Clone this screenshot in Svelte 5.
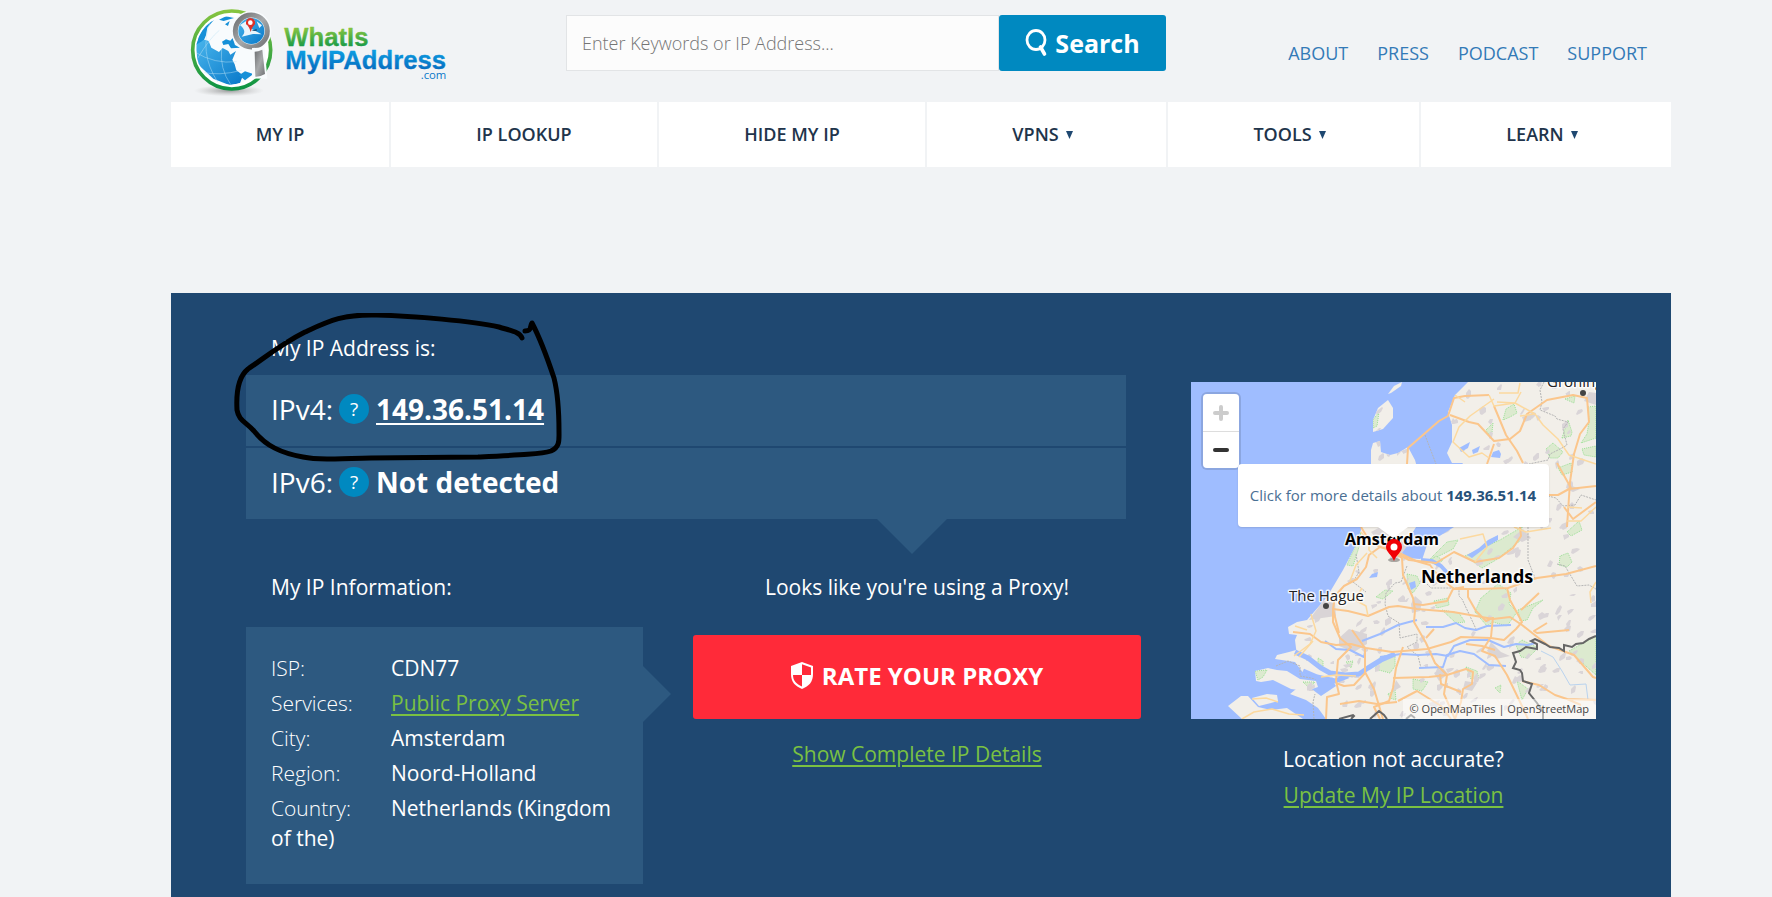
<script>
  const nav = [
    { label: 'MY IP', menu: false },
    { label: 'IP LOOKUP', menu: false },
    { label: 'HIDE MY IP', menu: false },
    { label: 'VPNS', menu: true },
    { label: 'TOOLS', menu: true },
    { label: 'LEARN', menu: true }
  ];
  const links = ['ABOUT', 'PRESS', 'PODCAST', 'SUPPORT'];
  const details = [
    { label: 'ISP:', value: 'CDN77' },
    { label: 'Services:', value: 'Public Proxy Server', link: true },
    { label: 'City:', value: 'Amsterdam' },
    { label: 'Region:', value: 'Noord-Holland' },
    { label: 'Country:', value: 'Netherlands (Kingdom of the)' }
  ];

  const land = [
    'M180 90L180 68L182 61L189 59L190 70L199 73L207 71L217 65L224 78L230 100L236 125L225 145L214 163L222 170L231 178L242 145L263 145L270 120L262 95L272 81L261 81L256 71L261 60L261 43L257 30L264 13L277 0H405V337H135L127 326L115 318L99 312L110 303L122 308L130 314L145 304L140 296L125 294L112 288L106 274L104 258L106 253L98 252L97 245L106 240L116 238L136 215L152 188L164 165L171 145Z',
    'M182 50L182 38L187 26L197 18L202 26L202 36L192 47Z',
    'M197 12L203 4L211 0L210 4L200 11Z',
    'M84 277L86 273L98 270L105 268L113 276L124 281L140 288L144 293L131 295L113 292L104 280Z',
    'M65 299L64 289L77 286L86 288L96 289L109 297L125 299L127 305L115 309L100 307L82 298L70 300Z',
    'M61 316L76 312L86 313L87 319L76 322L68 324Z',
    'M37 324L50 314L57 314L67 325L80 328L96 326L112 337H51Z'
  ];
  const waters = [
    'M211 171L220 159L242 145H263L239 160L231 170L229 177L216 176Z',
    'M276 173L288 166L297 158L307 153L307 158L294 166L281 176Z',
    'M302 70L308 68L310 72L309 76L300 75Z', 'M281 68L289 64L287 70L282 72Z', 'M268 66L279 60L277 66L270 70Z',
    'M218 201L224 199L225 205L220 208Z', 'M181 192L187 190L186 195L178 196Z'
  ];
  const rivers = [
    'M104 270L117 276L130 286L139 291L154 293L168 292L177 286L190 278L204 272', 'M112 289L126 295L144 299L157 294',
    'M189 275L210 272L228 273L245 272L257 274L263 264L279 258L297 258L313 265L325 262L337 263L344 261',
    'M134 259L145 267L159 268L173 275L174 270', 'M171 259L189 252L207 243L218 240L226 238', 'M235 245L252 245L265 241L274 246L285 248L296 244L320 243',
    'M228 286L252 285L256 273L269 269L283 272L298 283L315 284'
  ];
  const roads = [
    'M216 82L217 66L248 39L257 34L263 16L274 14L298 13M259 33L278 40L287 42L303 59L319 57L329 49L336 32L356 18L382 13L396 16L398 40L389 52L383 72L379 100L376 145',
    'M303 24L308 36L315 53L326 69L332 81M303 62L296 82',
    'M298 13L303 24L324 21L344 32L352 43L367 57L378 73L405 82M264 13L274 20M303 17L279 34L268 45L262 60L278 75L291 71L298 76M308 11H327L329 1M329 34L343 32M306 20L324 21L330 10',
    'M357 113L367 113L378 107L405 104M366 81L380 106M373 125L382 137L405 120M329 145L330 154L322 166L308 176L284 180L263 170L245 181L218 178L205 171',
    'M203 158L189 165L178 173L175 185L166 197L153 204L144 214L142 227L148 251M203 171L211 176L212 193L222 216L224 228L223 240L235 261L244 281L256 293L253 312L264 337',
    'M170 145L178 158L189 165L206 170L225 179L239 183L248 195L263 207L287 207L317 206L346 196L375 192L405 184',
    'M142 227L157 229L177 234L198 225L207 224L226 227L262 230L302 237L319 235L331 243L345 254L358 264L383 273L402 295L405 296',
    'M222 222L232 223L256 219L262 207L273 205M277 208L277 215L285 229L295 239L301 236M302 235L300 255L291 269L304 274L316 293L331 324L337 337',
    'M102 250L119 252L130 260L145 263L160 262L175 266L201 270L236 267L260 260L270 255L300 256L313 258L325 247L331 240L319 218L316 206',
    'M142 227L142 240L149 256L160 265L147 278L145 299L148 312L136 315L135 337M161 248L174 266L174 290L183 307L192 337M175 290L163 303L153 304L145 301',
    'M212 265L205 286L202 306L198 319L183 325L189 337M202 296L238 295L256 293L275 287L282 290L281 302L272 307L270 320L264 337',
    'M149 322L168 319L186 322L206 320M207 319L226 309L250 324L260 337M249 292L250 302L270 310M243 247L235 256M275 262L291 264L304 268',
    'M331 299L348 303L364 313L376 317L390 323M376 317L405 318M356 241L343 249L346 251L378 248M330 228L348 211',
    'M120 232L125 249L119 262L103 274M171 206L164 218L175 224L177 234M176 171L165 183L159 199M178 158V168L186 176M170 150L176 158L190 160',
    'M51 337L63 330L81 327L98 332L113 333M61 317L75 316L87 320M130 295L145 293L165 294M104 244L116 248M122 259L108 275',
    'M376 125L391 126M376 139H390L405 125M269 157L292 152L296 165L284 180M323 145L335 150L360 146M405 200L399 210L400 221'
  ];
  const parks = [
    'M312 38L315 27L323 22L326 31L319 35Z', 'M355 67L362 61L372 70L367 76L359 76Z', 'M367 86L380 81L381 90L371 93Z', 'M397 25L405 24V56L390 61L396 52L398 40Z', 'M371 56L377 38L381 50L380 54Z', 'M295 48L302 41L301 50L297 52Z', 'M391 67L405 64V75L393 73Z', 'M374 17L384 14L383 21Z',
    'M238 178L256 160L267 158L262 167L248 174Z', 'M274 174L309 158L331 145L330 158L305 178L291 186Z', 'M216 192L226 194L229 201L222 211L217 207Z',
    'M284 230L290 216L307 202L320 211L318 222L326 230L316 244L302 240L296 244Z', 'M325 263L331 258L347 266L337 276L330 275Z', 'M378 269L405 254V293L387 277Z',
    'M275 285L286 289L288 297L280 297Z', 'M222 297L237 300L231 309L222 307Z', 'M243 219L257 216L258 223L246 226Z', 'M251 228L268 231L274 240L265 241Z',
    'M326 299L337 307L331 318Z', 'M189 275L204 272L204 284L199 291L184 287Z', 'M155 280L162 279L160 286Z', 'M164 165L170 150L168 165L162 184L156 183Z', 'M368 183L369 174L377 171L381 180L376 185Z',
    'M376 150L388 139L391 148L380 154Z', 'M64 289L76 288L72 295L67 298Z', 'M112 300L124 300L118 306Z', 'M327 228L352 218L342 226L336 238L329 239Z', 'M185 215L194 208L202 209L192 217Z',
    'M197 312L204 308L205 318L199 316Z', 'M127 276L132 279L132 286L127 283Z', 'M304 306L310 303L309 311Z', 'M182 46L182 38L188 30L186 44Z', 'M262 95L268 88L266 94ZM240 178L245 174L252 178L246 183Z'
  ];
  const cities = [
    'M180 150L193 143L206 153L217 166L206 177L192 165Z', 'M118 238L132 219L144 221L145 234L131 236Z', 'M148 256L158 247L176 252L176 262L163 270L148 264Z', 'M220 222L224 214L231 220L229 229L221 231Z',
    'M300 260L310 270L319 274L305 277L296 269Z', 'M376 102L389 107L382 110L377 108Z', 'M331 35L342 31L340 38L333 40Z', 'M398 10L405 11V23L393 19Z', 'M238 321L249 318L246 325L239 324Z',
    'M274 299L286 301L281 309L272 307Z', 'M205 298L210 305L201 310Z', 'M322 155L332 147L340 156L331 160Z', 'M243 291L252 286L257 292L248 299Z', 'M185 60L190 58L191 63L187 65Z'
  ];
  const borders = [
    'M405 254L398 257L392 261L385 262L381 265L373 263L373 269L368 266L359 265L354 262L348 259L344 257L340 259L346 262V267L335 265L329 269L322 271L325 280L322 286L329 288L331 291L332 299L341 302L338 311L346 321L352 330L352 337',
    'M148 337L162 333L163 334L160 337M179 337L188 329L193 333L196 337M215 337L220 333L224 336'
  ];
  const dashes = [
    'M234 53L245 82M353 0L349 8L351 20L349 28L364 34L366 37L377 40L372 47L376 63L371 66L359 72L357 78L338 82M357 114L365 116L372 124L384 123L390 113L405 118M337 145L337 178L344 196M366 182L374 184L380 194L386 204L398 203L405 207',
    'M216 184L210 200L204 201L195 211L194 222L197 234L208 241L209 256L226 252L226 260L216 265L227 274L230 286M236 202L240 206L268 206L268 214L271 217L285 247M85 284L97 279L109 284L109 294L125 297M123 337L122 320L124 312M165 172L168 190L162 200L175 210'
  ];
  let seed = 7;
  const next = (range) => {
    seed = (seed * 16807) % 2147483647;
    return Math.floor((seed / 2147483647) * range);
  };
  const towns = Array.from({ length: 260 }, () => {
    const w = 2 + next(4);
    const h = 1 + next(4);
    return `M${110 + next(295)} ${next(335)}l${w} ${-h}l${1 + next(3)} ${next(3)}l${-next(3)} ${h + 1}l${-w} ${next(4)}l-${next(3)} -1Z`;
  });
</script>

<div class="page">
  <header>
    <a class="logo" href="#home" aria-label="WhatIsMyIPAddress.com">
      <svg viewBox="90 20 780 270" width="260" height="90">
        <defs>
          <linearGradient id="ring" x1="0" y1="0" x2="0" y2="1"><stop offset="0" stop-color="#86c440" /><stop offset="1" stop-color="#0d9444" /></linearGradient>
          <linearGradient id="green" x1="0" y1="0" x2="0" y2="1"><stop offset="0.2" stop-color="#82c341" /><stop offset="0.85" stop-color="#159947" /></linearGradient>
          <linearGradient id="blue" x1="0" y1="0" x2="0" y2="1"><stop offset="0.2" stop-color="#0c9be0" /><stop offset="0.9" stop-color="#0569bd" /></linearGradient>
          <linearGradient id="sea" x1="0" y1="0" x2="1" y2="1"><stop offset="0" stop-color="#48b5ec" /><stop offset="1" stop-color="#0878c9" /></linearGradient>
          <linearGradient id="steel" x1="0" y1="0" x2="1" y2="1"><stop offset="0" stop-color="#6c6e70" /><stop offset="0.5" stop-color="#a7a9ab" /><stop offset="1" stop-color="#707274" /></linearGradient>
          <radialGradient id="shade"><stop offset="0" stop-color="#777" stop-opacity="0.7" /><stop offset="1" stop-color="#aaa" stop-opacity="0" /></radialGradient>
          <clipPath id="globe"><circle cx="211" cy="150" r="103" /></clipPath>
        </defs>
        <ellipse cx="207" cy="271" rx="105" ry="17" fill="url(#shade)" />
        <circle cx="215" cy="149" r="117" fill="#fff" stroke="url(#ring)" stroke-width="11" />
        <g clip-path="url(#globe)">
          <circle cx="211" cy="150" r="103" fill="#f8fbfd" />
          <path d="M108 125L135 118L146 122L154 142L177 155L188 143L205 152L211 163L228 152L217 178L224 192L229 210L249 225L240 248L210 255L160 235L112 190Z" fill="url(#sea)" />
          <path d="M117 105L138 72L164 56L142 82L138 105L132 119L108 133ZM177 58L198 48L222 53L191 62ZM195 72L209 62L204 77ZM186 124L198 117L211 121L218 113L225 134L240 142L213 144L205 131L190 134ZM237 225L255 213L280 221L255 240Z" fill="#1690d8" />
          <path d="M104 155Q165 192 230 184M125 215Q175 228 245 210M152 60Q115 155 173 245M185 144Q178 205 213 254M112 175Q150 112 178 90" fill="none" stroke="#bce2f7" stroke-width="2" opacity="0.7" />
        </g>
        <circle cx="274" cy="92" r="60" fill="#f8fbfd" />
        <circle cx="274" cy="92" r="48" fill="#e9f5fc" stroke="url(#steel)" stroke-width="15" />
        <circle cx="274" cy="92" r="39" fill="url(#sea)" />
        <path d="M240 74L260 61L284 60L274 85L305 102L279 101L245 109Q263 94 240 74ZM290 63L306 75L298 83Z" fill="#e9f5fc" />
        <path d="M274 91L290 86V92Z" fill="#174e73" /><path d="M272 95Q267 77 258 72Q256 54 271 53Q287 55 285 71Q276 80 272 95Z" fill="#df3127" />
        <circle cx="271" cy="67" r="7" fill="#fff" />
        <path d="M276 143L314 141L322 235L276 234Z" fill="#f8fbfd" /><path d="M284 154Q294 154 307 148L315 221Q300 230 286 229Z" fill="url(#steel)" />
        <g font-family="'Liberation Sans', sans-serif" font-weight="700" font-size="77" stroke-linejoin="round">
          <text x="373" y="138" fill="url(#green)" stroke="url(#green)">WhatIs</text>
          <text x="376" y="206" fill="url(#blue)" stroke="url(#blue)">MyIPAddress</text>
        </g>
        <text x="782" y="236" font-family="'Open Sans', sans-serif" font-size="34" fill="#0878c9">.com</text>
      </svg>
    </a>
    <form class="search" onsubmit={(e) => e.preventDefault()}>
      <input type="text" aria-label="Enter Keywords or IP Address" placeholder="Enter Keywords or IP Address..." />
      <button type="submit">
        <svg viewBox="0 0 22 28" width="22" height="28" fill="none" stroke="#fff"><ellipse cx="11" cy="11" rx="9" ry="9.500" stroke-width="2.800" /><path d="M15.500 18L19.500 25" stroke-width="3.600" stroke-linecap="round" /></svg>
        Search
      </button>
    </form>
    <div class="links">
      {#each links as link}<a href="#{link.toLowerCase()}">{link}</a>{/each}
    </div>
  </header>

  <nav>
    {#each nav as item}
      <a href="#nav" class:menu={item.menu}>{item.label}{#if item.menu}<svg viewBox="0 0 7 10" width="7" height="10"><path d="M0 2H7L3.500 10Z" fill="#1f4871" /></svg>{/if}</a>
    {/each}
  </nav>

  <main>
    <div class="info">
      <h2>My IP Address is:</h2>
      <div class="addresses">
        <div class="row"><span>IPv4:</span><button class="help" aria-label="About IPv4">?</button><a href="#ip">149.36.51.14</a></div>
        <div class="row"><span>IPv6:</span><button class="help" aria-label="About IPv6">?</button><strong>Not detected</strong></div>
      </div>
      <svg class="scribble" viewBox="0 0 330 152" width="330" height="152" aria-hidden="true">
        <path d="M288 25C286 19 278 18 265 14C238 8 180 3 143 2C109 1 95 8 71 19C47 31 29 46 14 56C4 64 2 79 3 97C5 108 11 108 20 118C32 133 47 140 69 144C83 147 104 146 137 145L244 144C286 142 308 141 317 138C326 134 325 127 325 119C325 94 324 81 320 65C315 50 308 29 298 10C295 13 299 18 291 18" />
      </svg>
      <div class="lower">
        <section class="about">
          <h2>My IP Information:</h2>
          <div class="box">
            {#each details as d}
              <p><span>{d.label}</span>{#if d.link}<a href="#services">{d.value}</a>{:else}{d.value}{/if}</p>
            {/each}
          </div>
        </section>
        <section class="proxy">
          <h2>Looks like you're using a Proxy!</h2>
          <button class="rate">
            <svg viewBox="0 0 22 27" width="22" height="27"><path d="M11 0L22 4V12C22 20 18 24 11 27C4 24 0 20 0 12V4Z" fill="#fff" /><path d="M11 2.300L20 5.500V13H11ZM2 13H11V24.600C5.500 22 2 19 2 13Z" fill="#ff2a39" /></svg>
            RATE YOUR PROXY
          </button>
          <a href="#details">Show Complete IP Details</a>
        </section>
      </div>
    </div>

    <aside>
      <div class="map">
        <svg class="tiles" viewBox="0 0 405 337" preserveAspectRatio="xMidYMid slice" role="img" aria-label="Map of the Netherlands">
          <defs><clipPath id="ground">{#each land as d}<path {d} />{/each}</clipPath></defs>
          <rect width="405" height="337" fill="#9fbdff" />
          {#each land as d}<path {d} fill="#f2efe9" />{/each}
          <g clip-path="url(#ground)">
            {#each parks as d}<path {d} fill="#dceacf" stroke="#9be096" stroke-dasharray="1 1" />{/each}
            {#each towns as d}<path {d} fill="#dad5d8" />{/each}
            {#each cities as d}<path {d} fill="#d9d4d6" />{/each}
          </g>
          <g fill="none" stroke-linejoin="round">
            {#each dashes as d}<path {d} stroke="#b5b5b5" stroke-dasharray="2 1" />{/each}
            {#each rivers as d, i}<path {d} stroke="#9fbdff" stroke-width={i < 2 ? 5 : 2} />{/each}
            <path d="M350 269L362 275L371 289L379 303L395 302L397 318" stroke="#b9d3ef" />
            <path d="M230 178L241 179L250 184L260 195" stroke="#9fbdff" stroke-width="4" />
          </g>
          {#each waters as d}<path {d} fill="#9fbdff" />{/each}
          {#each roads as d, i}<path {d} fill="none" stroke={i === 2 || i > 12 ? '#fcd99f' : '#fbc68c'} stroke-width={i === 2 || i > 12 ? 1.5 : 2} stroke-linejoin="round" />{/each}
          {#each borders as d}<path {d} fill="none" stroke="#666" stroke-width="2" />{/each}
          <circle cx="392" cy="11" r="3" fill="#444" /><circle cx="135" cy="224" r="3" fill="#444" />
          <g class="names">
            <text x="356" y="5" font-size="15">Groningen</text>
            <text x="98" y="219" font-size="15">The Hague</text>
            <text x="154" y="163" font-size="16" font-weight="700">Amsterdam</text>
            <text x="230" y="201" font-size="18" font-weight="700">Netherlands</text>
          </g>
        </svg>
        <div class="zoom">
          <button disabled aria-label="Zoom in"><svg viewBox="0 0 16 16" width="16" height="16"><path d="M8 2V14M2 8H14" stroke="#ccc" stroke-width="4" stroke-linecap="round" /></svg></button>
          <button aria-label="Zoom out"><svg viewBox="0 0 16 16" width="16" height="16"><path d="M2 8H14" stroke="#333" stroke-width="4" stroke-linecap="round" /></svg></button>
        </div>
        <div class="popup">Click for more details about <b>149.36.51.14</b></div>
        <svg class="pin" viewBox="0 0 18 25" width="18" height="25"><ellipse cx="9" cy="21" rx="6" ry="2" fill="#000" opacity="0.300" /><path d="M9 22C7 16 1 13 1 8A8 8 0 0 1 17 8C17 13 11 16 9 22Z" fill="#f00006" /><circle cx="9" cy="8" r="3.500" fill="#fff" /></svg>
        <div class="credit">© OpenMapTiles | OpenStreetMap</div>
      </div>
      <p>Location not accurate?</p>
      <p><a href="#update">Update My IP Location</a></p>
    </aside>
  </main>
</div>

<style>
  :global(body) { margin: 0; background: #f1f3f5; }
  * { box-sizing: border-box; }
  .page { padding: 0 101px 0 171px; font-family: "Open Sans", "Noto Sans", sans-serif; }
  button, input { font-family: inherit; }
  svg { display: block; flex: none; }
  header { display: flex; align-items: flex-start; height: 102px; padding-right: 24px; }
  .logo { margin: 7px 116px 0 19px; }
  .search { display: flex; width: 600px; height: 56px; margin-top: 15px; }
  .search input { flex: 1; min-width: 0; padding: 0 15px; border: 1px solid #e2e4e6; background: #fcfcfc; border-radius: 0; font-size: 18px; font-weight: 300; color: #666; }
  .search input::placeholder { color: #757575; opacity: 1; }
  .search button { display: flex; align-items: center; justify-content: center; gap: 8px; width: 167px; border: 0; border-radius: 3px; background: #0089c0; color: #fff; font-size: 25px; font-weight: 700; }
  .links { display: flex; gap: 29px; margin: 41px 0 0 auto; }
  .links a { color: #337ab7; font-size: 18px; line-height: 24px; font-weight: 500; text-decoration: none; }
  nav { display: grid; grid-template-columns: 218fr 266fr 266fr 239fr 251fr 250fr; gap: 2px; height: 65px; }
  nav a { display: flex; align-items: center; justify-content: center; gap: 7px; padding-bottom: 2px; background: #fff; color: #21344b; font-size: 18px; font-weight: 600; text-decoration: none; }
  nav .menu { padding-right: 8px; }
  main { display: grid; grid-template-columns: 895fr 405fr; column-gap: 50px; margin-top: 126px; padding: 40px 75px 13px; background: #1f4871; color: #fff; font-size: 21px; line-height: 30px; }
  main h2 { margin: 0; font-size: 21px; line-height: 30px; font-weight: 400; }
  main a { color: #7ac142; text-decoration: underline; text-decoration-thickness: 2px; text-underline-offset: 3px; }
  .info { position: relative; }
  .info > h2 { padding-left: 25px; }
  .addresses { position: relative; display: grid; gap: 2px; margin: 12px 15px 0 0; }
  .addresses::after { content: ""; position: absolute; top: 100%; left: 631px; border: 35px solid transparent; border-top-color: #2d5980; border-bottom: 0; }
  .row { display: flex; align-items: center; height: 71px; padding: 0 0 3px 25px; background: #2d5980; font-size: 28px; }
  .row a, .row strong { color: #fff; font-weight: 700; }
  .help { width: 30px; height: 30px; margin: 0 7px 0 6px; padding: 0; border: 0; border-radius: 50%; background: #0089c0; color: #fff; font-size: 19px; line-height: 30px; }
  .scribble { position: absolute; left: -12px; top: -20px; fill: none; stroke: #000; stroke-width: 5px; stroke-linecap: round; stroke-linejoin: round; pointer-events: none; }
  .lower { display: grid; grid-template-columns: 397fr 448fr; column-gap: 50px; margin-top: 53px; }
  .about h2 { padding-left: 25px; }
  .box { position: relative; min-height: 257px; margin-top: 25px; padding: 26px 25px; background: #2d5980; }
  .box::after { content: ""; position: absolute; left: 100%; top: 39px; border: 28px solid transparent; border-left-color: #2d5980; border-right: 0; }
  .box p { margin: 0 0 5px; }
  .box span { display: inline-block; width: 120px; font-weight: 300; }
  .proxy { display: flex; flex-direction: column; align-items: center; }
  .rate { display: flex; align-items: center; justify-content: center; gap: 9px; width: 100%; height: 84px; margin: 33px 0 20px; padding-bottom: 4px; border: 0; border-radius: 3px; background: #ff2a39; color: #fff; font-size: 24px; font-weight: 700; }
  aside { padding-top: 49px; text-align: center; }
  aside p { margin: 0 0 6px; }
  .map { position: relative; height: 337px; margin-bottom: 25px; overflow: hidden; }
  .tiles { width: 100%; height: 100%; }
  .names { font-family: "Open Sans", sans-serif; fill: #222; stroke: #fff; stroke-width: 3px; stroke-opacity: 0.8; paint-order: stroke; stroke-linejoin: round; }
  .names text[font-weight] { fill: #000; }
  .zoom { position: absolute; left: 12px; top: 12px; width: 36px; border-radius: 4px; box-shadow: 0 0 0 2px rgba(0, 0, 0, 0.12); }
  .zoom button { display: grid; place-items: center; width: 36px; height: 36px; padding: 0; border: 0; background: #fff; border-radius: 0 0 4px 4px; }
  .zoom button:first-child { height: 38px; border-bottom: 1px solid #ddd; border-radius: 4px 4px 0 0; }
  .popup { position: absolute; left: 50%; top: 82px; width: 311px; height: 63px; margin-left: -156px; border-radius: 4px; background: #fff; box-shadow: 0 1px 2px rgba(0, 0, 0, 0.12); color: #4a6f94; font-size: 15px; line-height: 63px; white-space: nowrap; }
  .popup::after { content: ""; position: absolute; left: 50%; top: 100%; margin-left: -15px; border: 15px solid transparent; border-top: 11px solid #fff; border-bottom: 0; }
  .popup b { color: #28527a; }
  .pin { position: absolute; left: 50%; bottom: 155px; margin-left: -9px; }
  .credit { position: absolute; right: 0; bottom: 0; padding: 0 7px; background: rgba(255, 255, 255, 0.5); color: #444; font-size: 11px; line-height: 20px; }
</style>
